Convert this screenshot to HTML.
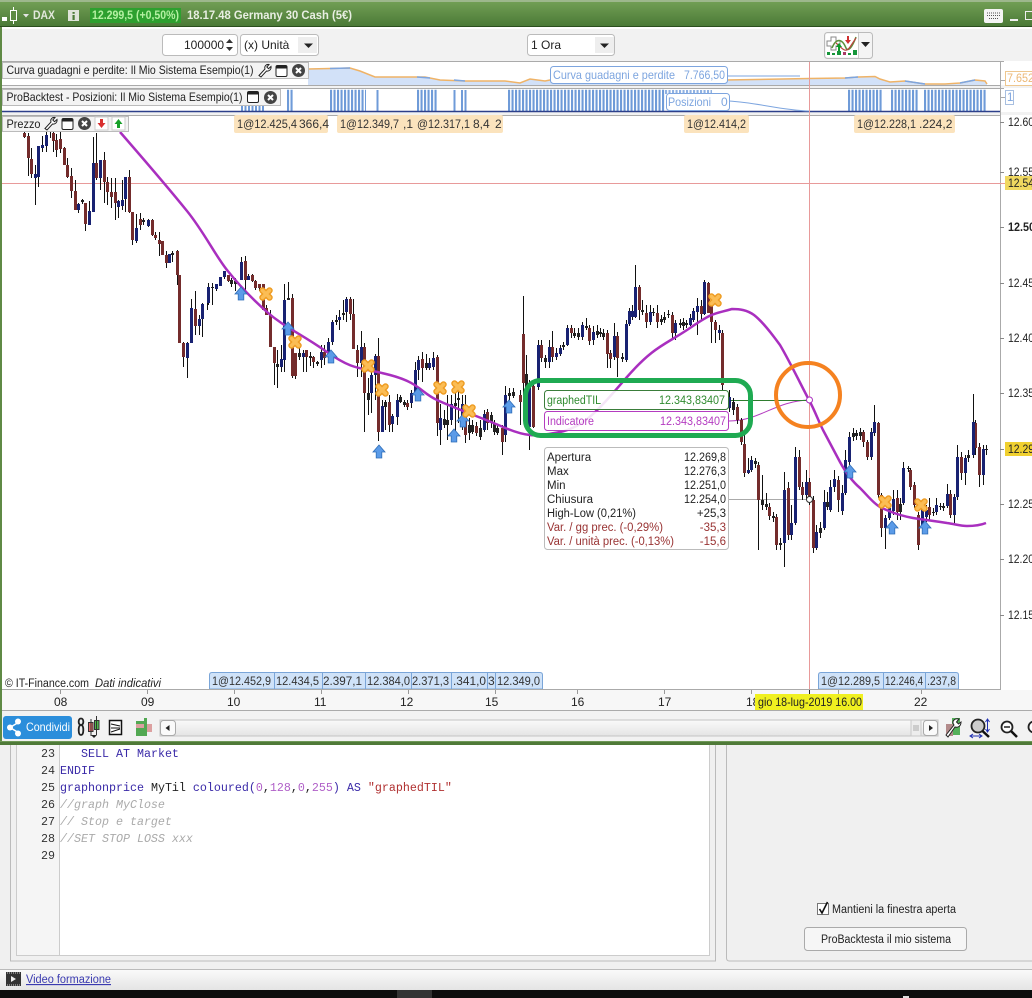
<!DOCTYPE html>
<html lang="it"><head><meta charset="utf-8"><title>DAX</title>
<style>html,body{margin:0;padding:0;background:#f0f0f0;width:1032px;height:998px;overflow:hidden}svg{display:block}text{font-family:"Liberation Sans",sans-serif;font-size:11.5px;fill:#222;white-space:pre}.m{font-family:"Liberation Mono",monospace;font-size:11.67px}.a{font-size:12px;fill:#222}.t{font-size:12px;fill:#333}</style></head><body>
<svg width="1032" height="998" viewBox="0 0 1032 998" xmlns="http://www.w3.org/2000/svg">
<defs>
<linearGradient id="g" x1="0" y1="0" x2="0" y2="1"><stop offset="0" stop-color="#719e54"/><stop offset="1" stop-color="#4b7a37"/></linearGradient>
<linearGradient id="s" x1="0" y1="0" x2="0" y2="1"><stop offset="0" stop-color="#fafafa"/><stop offset="1" stop-color="#e4e4e4"/></linearGradient>
<g id="ar"><path d="M0-7L6 0H2.8V6H-2.8V0H-6Z" fill="#5b9be8" stroke="#2e6db8" stroke-width=".8"/></g>
<g id="xx"><path d="M-3.5-3.500L3.500 3.500M3.500-3.500L-3.500 3.500" stroke="#ee9c22" stroke-width="6.500" stroke-linecap="round"/><path d="M-3.500-3.500L3.500 3.500M3.500-3.500L-3.500 3.500" stroke="#fbbd55" stroke-width="3.500" stroke-linecap="round"/></g>
<g id="wr"><path d="M1 12L7 5.5C6 2.5 8.500 .5 11 1L8.800 3.500L10.500 5.200L13 3C13.500 6 11 8 8.500 7.500L3 13.500Z" fill="#fff" stroke="#222" stroke-width="1"/></g>
<g id="wn"><rect x=".5" y=".5" width="11" height="11" rx="1.500" fill="#fff" stroke="#222" stroke-width="1"/><rect x=".5" y=".5" width="11" height="3" fill="#222"/></g>
<g id="cl"><circle cx="6.500" cy="6.500" r="6.500" fill="#444"/><path d="M4 4L9 9M9 4L4 9" stroke="#fff" stroke-width="2"/></g>
</defs>
<rect width="1032" height="998" fill="#f0f0f0"/>

<!-- title bar -->
<rect width="1032" height="2" fill="#9db78c"/><rect y="2" width="1032" height="24" fill="url(#g)"/><rect y="26" width="1032" height="1" fill="#2c4f1f"/><rect y="27" width="1032" height="2" fill="#fff"/>
<path d="M2 17V21H7V17Z" fill="#fff"/><rect x="10.500" y="10.500" width="6" height="10" fill="#5e8c44" stroke="#fff"/><path d="M13.500 7V10M13.500 21V24" stroke="#fff"/>
<path d="M23 14H29L26 17.500Z" fill="#e4e4e4"/>
<text x="33" y="19" textLength="22" lengthAdjust="spacingAndGlyphs" style="font-size:12px;font-weight:bold;fill:#e2e8dc">DAX</text>
<rect x="68" y="10" width="11" height="11" fill="#dfe4da"/><rect x="72.500" y="12" width="2.200" height="1.800" fill="#4b7a37"/><rect x="72.500" y="15" width="2.200" height="5" fill="#4b7a37"/>
<rect x="90" y="8" width="91" height="15" fill="#2da02f"/><text x="92" y="19" textLength="87" lengthAdjust="spacingAndGlyphs" style="font-size:12px;font-weight:bold;fill:#b4f0a2">12.299,5 (+0,50%)</text>
<text x="187" y="19" textLength="165" lengthAdjust="spacingAndGlyphs" style="font-size:12px;font-weight:bold;fill:#e8eee2">18.17.48 Germany 30 Cash (5€)</text>
<rect x="984" y="9" width="19" height="14" rx="2" fill="#f4f4f4"/><path d="M987 13H1000M987 15.500H1000M989 18.500H998" stroke="#555" stroke-dasharray="1 1"/>
<rect x="1010" y="19" width="8" height="2" fill="#f0f0f0"/><rect x="1025.500" y="11.500" width="9" height="8" fill="none" stroke="#f0f0f0"/>

<!-- toolbar -->
<rect x="0" y="29" width="1032" height="32" fill="#f2f2f2"/>
<rect x="162.500" y="34.500" width="75" height="21" rx="3" fill="#fff" stroke="#bbb"/>
<text x="184" y="49" class="a">100000</text>
<path d="M226 43L229.500 39L233 43ZM226 47H233L229.500 51Z" fill="#333"/>
<rect x="240.500" y="34.500" width="78" height="21" rx="3" fill="#fff" stroke="#bbb"/><rect x="298" y="37" width="19" height="16" fill="#eee"/>
<text x="244" y="49" class="a">(x) Unità</text><path d="M304 43.500H313L308.500 48Z" fill="#222"/>
<rect x="527.500" y="34.500" width="87" height="21" rx="3" fill="#fff" stroke="#bbb"/><rect x="595" y="37" width="19" height="16" fill="#eee"/>
<text x="531" y="49" class="a">1 Ora</text><path d="M600 43.500H609L604.500 48Z" fill="#222"/>
<rect x="824.500" y="32.500" width="48" height="26" rx="3" fill="#f4f4f4" stroke="#bbb"/><path d="M858.500 33V58" stroke="#ccc"/>
<rect x="826" y="34" width="32" height="23" fill="#fff"/>
<path d="M827 41H831V37H836V41H840V46H836V50H831V46H827Z" fill="#fff" stroke="#888"/>
<path d="M832 48C836 38 842 38 846 48C848 52 852 48 856 37" fill="none" stroke="#5d8f3d" stroke-width="1.500"/><path d="M836 43C842 48 845 54 850 47C852 44 854 41 856 38" fill="none" stroke="#b9433c" stroke-width="1.200"/>
<path d="M838 52V47H836L839 43L842 47H840V52Z" fill="#0a9a28"/><path d="M847 36H849V40H851L848 44L845 40H847Z" fill="#cf3030"/>
<path d="M827 55V52H830V55ZM832 55V53H835V55ZM837 55V51H841V55ZM848 55V53H851V55ZM853 55V50H857V55Z" fill="#16963a"/><path d="M843 55V52H846V55Z" fill="#a83a66"/>
<path d="M861 42H870L865.500 47Z" fill="#222"/>

<!-- left green border -->
<rect x="0" y="27" width="2" height="716" fill="#5f8a45"/>

<!-- chart -->
<rect x="2" y="61" width="998" height="629" fill="#fff"/>
<rect x="1000" y="61" width="32" height="629" fill="#fff"/>
<rect x="2" y="85" width="1030" height="3" fill="#f2f2f2"/><rect x="2" y="112" width="1030" height="3" fill="#f2f2f2"/>
<path d="M2 61.500H1000M2 85.500H1000M2 88.500H1000M2 115.500H1000" stroke="#aaa"/>
<path d="M1000.500 61V690M1000 61.500H1004M1000 80.500H1005M1000 88.500H1004M1000 97.500H1005" stroke="#aaa"/>

<!-- equity -->
<path d="M308 85V69L330 68.500L350 68L360 71L375 77H425L440 80L465 81H505L520 83L530 79L545 81L550 80H725L809 78.500L845 78L858 77L875 76.500L880 79L890 82L905 81L925 84H945L960 83L975 80L985 81L987 84V85Z" fill="#d2e1f8"/>
<path d="M308 69L330 68.500L350 68L360 71L375 77H425L440 80L465 81H505L520 83L530 79L545 81L550 80H725L809 78.500L845 78L858 77L875 76.500L880 79L890 82L905 81L925 84H945L960 83L975 80L985 81L987 84" fill="none" stroke="#efb367" stroke-width="1.500"/>
<path d="M330 68.500L350 68M417 77L430 78M454 80L465 81M845 78L858 77M905 81L925 84M960 83L975 80" fill="none" stroke="#7da5df" stroke-width="1.500"/>

<!-- positions -->
<path d="M241 108H265" stroke="#6f9bd8" stroke-width="6" stroke-dasharray="2 1.500"/>
<g stroke="#6f9bd8" stroke-width="21.500" stroke-dasharray="2.100 1.400">
<path d="M287 100.500H294M330 100.500H366M417 100.500H437M508 100.500H665M848 100.500H882M891 100.500H919M924 100.500H987"/>
</g>
<path d="M377.500 90V111M454.500 90V111M462 90V111M465.500 90V111" stroke="#6f9bd8" stroke-width="2"/>
<path d="M665 92H712" stroke="#8fb1e2" stroke-width="4" stroke-dasharray="2.100 1.400"/>
<path d="M2 111.500H1000" stroke="#2d3f8a" stroke-width="1.500"/>

<!-- crosshair -->
<path d="M809.500 62V690M2 183.500H1000" stroke="#e89a9a"/>

<!-- curve below -->
<path d="M729 421C760 421 775 401 809 400" fill="none" stroke="#b43bc0" stroke-width="1"/>
<path d="M729 400.500H809" stroke="#2f7d2f"/><path d="M729 499.500H809" stroke="#aaa"/>

<!-- candles -->
<g fill="none" transform="translate(.5,0)">
<path stroke="#111" stroke-width="1" d="M24 128V138M28 133V176M31 148V178M35 165V205M38 146V187M42 136V152M46 132V152M50 130V138M53 131V152M56 134V157M60 131V153M64 147V165M67 158V178M71 168V198M75 180V210M78 203V213M82 199V204M85 205V231M89 201V225M93 137V212M96 133V180M100 160V190M104 152V203M107 177V205M111 178V208M115 178V220M118 200V218M122 180V210M125 178V212M129 170V213M132 212V245M136 214V243M140 213V230M143 218V225M148 219V227M152 219V236M155 232V240M159 232V256M162 241V255M166 251V268M169 254V263M172 251V262M177 250V285M179 275V343M183 342V367M187 342V378M191 299V343M195 291V335M199 315V335M202 303V337M207 290V310M208 283V305M212 283V305M216 284V291M220 277V286M224 271V279M228 275V282M231 278V287M235 278V291M241 257V280M245 256V290M248 274V280M252 274V282M255 280V290M259 284V291M263 284V310M266 305V315M270 310V347M274 347V385M277 350V388M281 345V372M284 284V372M288 282V300M292 294V378M295 353V379M299 348V360M303 350V372M306 350V372M310 352V366M313 356V368M317 361V366M321 345V368M324 345V365M328 338V355M332 320V345M336 315V325M339 310V330M343 300V320M346 297V322M350 297V320M353 299V349M357 345V377M361 331V377M364 343V432M368 378V415M371 370V413M375 354V400M378 338V441M382 400V432M385 400V430M389 395V432M392 414V432M397 394V425M400 395V403M404 400V407M407 400V410M411 390V408M415 362V394M418 356V380M422 352V382M426 354V370M429 358V370M433 352V370M437 355V436M440 404V445M444 410V428M447 395V440M451 395V425M455 392V432M458 390V423M462 395V430M465 395V443M469 418V440M472 420V434M476 422V436M480 420V440M484 410V432M487 409V430M491 412V428M494 420V435M497 425V435M502 425V455M505 386V442M509 388V400M513 388V398M520 390V425M523 296V400M526 355V395M529 380V450M533 384V428M538 340V390M541 340V362M545 355V368M549 340V368M552 331V362M556 348V360M560 345V356M563 342V350M567 325V346M571 325V338M574 328V338M578 328V340M582 322V340M586 318V330M589 325V345M593 326V345M597 325V338M600 328V337M603 329V340M607 330V368M610 350V368M614 323V360M617 332V377M622 353V362M626 320V362M629 308V326M632 305V320M635 265V318M639 285V320M642 300V315M646 305V328M650 305V325M653 308V316M657 305V328M661 315V325M664 312V323M668 310V318M672 312V340M675 320V340M680 319V328M683 318V330M686 320V328M690 314V326M693 308V322M697 298V335M701 300V320M704 280V315M708 282V313M711 295V343M715 320V343M719 325V340M722 330V390M729 390V412M733 398V415M737 404V424M741 418V445M744 432V477M748 458V474M751 456V472M755 458V468M758 462V550M762 475V510M766 493V510M769 503V520M773 512V522M776 514V550M780 538V550M784 472V567M788 482V540M791 505V540M795 447V525M799 450V490M802 482V500M806 470V500M809 478V505M813 496V553M816 525V550M820 522V538M824 490V530M827 492V510M830 480V512M834 470V492M838 476V512M842 485V515M845 450V495M849 432V465M853 428V441M856 430V440M860 428V440M863 430V447M867 440V460M871 428V460M874 405V436M878 422V498M881 493V537M885 515V549M889 505V520M893 490V515M897 490V520M900 498V520M903 462V505M908 466V472M910 468V490M914 482V508M918 512V550M922 500V530M926 505V522M929 498V520M933 508V516M936 498V515M940 503V510M943 503V511M947 484V508M950 490V518M954 494V523M957 445V500M961 452V480M965 455V485M968 450V462M973 394V458M975 420V455M979 443V487M983 445V485M986 445V455"/>
<path stroke="#742c2c" stroke-width="3" d="M24 133V137M28 136V158M31 159V174M53 133V141M56 140V150M60 139V149M64 148V165M67 165V177M71 176V191M75 191V210M85 203V224M96 163V178M104 160V182M107 182V192M111 192V197M115 192V203M129 177V212M132 212V240M140 219V225M152 220V235M155 235V238M159 240V244M162 241V255M166 255V263M177 251V275M179 275V343M183 343V357M195 309V326M228 275V281M245 261V280M252 275V281M255 281V288M259 284V288M263 284V310M266 308V315M270 315V347M274 347V363M292 298V376M295 353V376M306 350V357M313 357V362M324 352V358M350 299V314M353 314V349M357 350V363M364 347V393M378 356V432M389 402V425M407 403V407M422 359V368M437 357V423M465 417V435M476 426V433M487 412V423M502 428V442M520 395V402M523 334V383M533 386V427M541 345V358M552 347V357M571 328V333M589 328V341M607 333V354M610 353V359M617 336V358M639 287V310M646 313V322M657 313V322M672 315V333M701 306V314M708 283V313M711 303V322M715 322V330M722 333V385M737 407V420M741 420V442M744 444V473M758 465V500M769 507V516M776 517V545M788 488V535M799 457V487M802 487V495M809 482V498M813 500V548M838 480V500M863 432V442M867 442V457M878 423V495M881 495V528M897 498V512M910 470V487M914 485V505M918 515V545M929 507V515M950 494V515M961 457V473M975 423V448M979 447V475"/>
<path stroke="#182272" stroke-width="3" d="M35 174V178M38 146V177M42 145V148M46 135V146M78 204V210M89 211V225M93 163V212M100 160V178M118 201V207M122 200V206M125 177V199M136 228V241M148 220V226M169 254V263M187 343V358M191 308V343M199 319V326M202 304V319M208 287V303M216 284V289M220 277V286M224 271V277M241 262V280M248 276V280M281 359V367M284 300V360M303 353V357M321 352V360M328 342V353M332 322V342M339 317V320M346 299V312M361 347V363M371 375V393M375 356V375M382 406V432M392 416V424M397 400V417M411 393V403M415 370V392M418 360V370M429 363V368M433 358V367M440 418V430M451 404V420M462 404V417M484 414V430M505 395V435M529 386V427M538 345V387M549 347V362M556 353V357M560 348V354M567 328V345M582 325V337M593 332V340M614 336V357M626 324V360M629 311V324M632 311V317M635 287V317M650 312V322M675 323V333M690 318V325M693 311V320M697 306V312M704 282V314M719 330V333M729 397V408M748 470V473M751 460V470M784 490V543M791 523V535M795 457V523M806 482V495M816 532V548M824 502V528M830 487V510M834 479V487M842 493V511M845 460V493M849 437V462M871 432V457M874 422V433M885 518V528M889 508V518M893 499V511M903 468V503M922 505V527M926 510V517M936 505V512M947 494V506M954 497V515M957 457V497M965 458V473M973 422V455M983 449V475"/>
<path stroke="#222" stroke-width="3" d="M82 200V202M143 220V222M172 253V255M212 287V288M231 280V284M235 281V284M277 364V367M288 298V300M299 353V357M310 356V358M317 362V364M336 320V322M343 313V315M368 393V400M385 402V407M400 397V402M404 402V405M426 363V368M444 419V425M447 420V425M455 403V406M458 398V400M469 425V433M472 425V432M480 428V437M491 415V423M494 423V432M497 428V433M509 393V396M513 392V396M526 374V390M545 358V362M563 345V347M574 333V336M578 333V337M586 326V328M597 331V335M600 332V334M603 333V337M622 357V359M642 310V312M653 312V313M661 319V322M664 317V320M668 314V315M680 323V325M683 322V326M686 323V325M733 402V410M755 461V464M762 500V505M766 504V507M773 516V518M780 543V545M820 528V533M827 502V507M853 433V437M856 433V436M860 432V436M900 504V512M908 468V469M933 512V513M940 506V507M943 506V508M968 455V458M986 449V450"/>
</g>

<!-- indicator -->
<path d="M120 132C140 155 170 190 187 211S215 255 227 270S250 297 267 312S300 333 327 352S360 367 390 375S420 392 437 400S480 417 503 427S535 437 560 432S600 408 627 377S665 345 690 328S715 314 732 309C740 309 747 310 754 315C763 322 772 334 780 345C790 362 800 383 809 400C815 411 818 420 823 430L840 462C846 473 853 482 860 488C868 496 873 503 880 507C890 512 902 516 913 518C925 520 935 521 947 523C955 524 960 526 967 526C975 526 981 525 986 523" fill="none" stroke="#a92fbf" stroke-width="2.500" stroke-linejoin="round"/>

<!-- arrows / markers -->
<use href="#ar" x="241" y="294"/><use href="#ar" x="288" y="329"/><use href="#ar" x="331" y="357"/><use href="#ar" x="379" y="452"/><use href="#ar" x="454" y="436"/><use href="#ar" x="463" y="421"/><use href="#ar" x="418" y="395"/><use href="#ar" x="509" y="407"/><use href="#ar" x="850" y="472"/><use href="#ar" x="892" y="528"/><use href="#ar" x="925" y="528"/>
<use href="#xx" x="266" y="294"/><use href="#xx" x="295" y="342"/><use href="#xx" x="368" y="366"/><use href="#xx" x="382" y="390"/><use href="#xx" x="440" y="388"/><use href="#xx" x="458" y="387"/><use href="#xx" x="469" y="411"/><use href="#xx" x="715" y="300"/><use href="#xx" x="885" y="502"/><use href="#xx" x="921" y="505"/>

<!-- panel labels -->
<rect x="2.500" y="62.500" width="306" height="16" fill="#f3f3f3" stroke="#bbb"/>
<text x="6.500" y="74" textLength="247" lengthAdjust="spacingAndGlyphs" style="font-size:12px">Curva guadagni e perdite: Il Mio Sistema Esempio(1)</text>
<use href="#wr" x="258" y="63.500"/><use href="#wn" x="275.500" y="65"/><use href="#cl" x="292" y="64"/>
<rect x="2.500" y="89.500" width="278" height="16" fill="#f3f3f3" stroke="#bbb"/>
<text x="6.500" y="101" textLength="236" lengthAdjust="spacingAndGlyphs" style="font-size:12px">ProBacktest - Posizioni: Il Mio Sistema Esempio(1)</text>
<use href="#wn" x="247" y="91"/><use href="#cl" x="264" y="91"/>
<rect x="2.500" y="116.500" width="126" height="15" fill="#f3f3f3" stroke="#bbb"/>
<text x="6.500" y="128" textLength="34" lengthAdjust="spacingAndGlyphs" style="font-size:12px">Prezzo</text>
<use href="#wr" x="44" y="116.500"/><use href="#wn" x="61.500" y="118"/><use href="#cl" x="78" y="117"/>
<rect x="95" y="117" width="13" height="13" fill="#fff" stroke="#ccc"/><path d="M100 119H103V123H105.500L101.500 128L97.500 123H100Z" fill="#d93030"/>
<rect x="112" y="117" width="13" height="13" fill="#fff" stroke="#ccc"/><path d="M117 128H120V124H122.500L118.500 119L114.500 124H117Z" fill="#16a028"/>

<!-- order labels top -->
<g fill="#fbe3bd"><rect x="234" y="115" width="94" height="18" rx="2"/><rect x="337" y="115" width="166" height="18" rx="2"/><rect x="684" y="115" width="65" height="18" rx="2"/><rect x="854" y="115" width="101" height="18" rx="2"/></g>
<text x="237" y="128" textLength="60" lengthAdjust="spacingAndGlyphs" class="t">1@12.425,4</text><text x="299" y="128" class="t">366,4</text>
<text x="340" y="128" textLength="59" lengthAdjust="spacingAndGlyphs" class="t">1@12.349,7</text><text x="403" y="128" class="t">,1</text>
<text x="417" y="128" textLength="53" lengthAdjust="spacingAndGlyphs" class="t">@12.317,1</text><text x="473" y="128" class="t">8,4</text><text x="495" y="128" class="t">2</text>
<text x="687" y="128" textLength="59" lengthAdjust="spacingAndGlyphs" class="t">1@12.414,2</text>
<text x="857" y="128" textLength="59" lengthAdjust="spacingAndGlyphs" class="t">1@12.228,1</text><text x="919" y="128" class="t">.224,2</text>

<!-- equity tooltip -->
<path d="M728 76H800" stroke="#7da5df"/><path d="M729 101C760 103 780 110 809 111" stroke="#7da5df" fill="none"/>
<rect x="550.500" y="66.500" width="177" height="17" rx="3" fill="#fff" stroke="#7da5df"/>
<text x="553" y="79" textLength="122" lengthAdjust="spacingAndGlyphs" style="font-size:12px;fill:#7da5df">Curva guadagni e perdite</text><text x="684" y="79" textLength="41" lengthAdjust="spacingAndGlyphs" style="font-size:12px;fill:#7da5df">7.766,50</text>
<rect x="666.500" y="93.500" width="63" height="17" rx="3" fill="#fff" stroke="#7da5df"/>
<text x="668" y="106" textLength="43" lengthAdjust="spacingAndGlyphs" style="font-size:12px;fill:#7da5df">Posizioni</text><text x="721" y="106" style="font-size:12px;fill:#7da5df">0</text>

<!-- tooltips -->
<rect x="544.500" y="390.500" width="184" height="19" rx="3" fill="#fff" fill-opacity=".88" stroke="#3a7d3a"/>
<text x="547" y="404" textLength="54" lengthAdjust="spacingAndGlyphs" style="font-size:11.500px;fill:#2f8a2f">graphedTIL</text><text x="659" y="404" textLength="66" lengthAdjust="spacingAndGlyphs" style="font-size:11.500px;fill:#2f8a2f">12.343,83407</text>
<rect x="544.500" y="411.500" width="184" height="19" rx="3" fill="#fff" fill-opacity=".88" stroke="#b43bc0"/>
<text x="547" y="425" textLength="47" lengthAdjust="spacingAndGlyphs" style="font-size:11.500px;fill:#b43bc0">Indicatore</text><text x="660" y="425" textLength="66" lengthAdjust="spacingAndGlyphs" style="font-size:11.500px;fill:#b43bc0">12.343,83407</text>
<rect x="544.500" y="447.500" width="184" height="102" rx="3" fill="#fff" stroke="#bbb"/>
<g style="font-size:11px">
<text x="547" y="461">Apertura</text><text x="684" y="461" textLength="42" lengthAdjust="spacingAndGlyphs">12.269,8</text>
<text x="547" y="475">Max</text><text x="684" y="475" textLength="42" lengthAdjust="spacingAndGlyphs">12.276,3</text>
<text x="547" y="489">Min</text><text x="684" y="489" textLength="42" lengthAdjust="spacingAndGlyphs">12.251,0</text>
<text x="547" y="503">Chiusura</text><text x="684" y="503" textLength="42" lengthAdjust="spacingAndGlyphs">12.254,0</text>
<text x="547" y="517" textLength="89" lengthAdjust="spacingAndGlyphs">High-Low (0,21%)</text><text x="726" y="517" text-anchor="end">+25,3</text>
<text x="547" y="531" textLength="116" lengthAdjust="spacingAndGlyphs" style="fill:#933">Var. / gg prec. (-0,29%)</text><text x="726" y="531" text-anchor="end" style="fill:#933">-35,3</text>
<text x="547" y="545" textLength="127" lengthAdjust="spacingAndGlyphs" style="fill:#933">Var. / unità prec. (-0,13%)</text><text x="726" y="545" text-anchor="end" style="fill:#933">-15,6</text>
</g>
<rect x="525.500" y="380.500" width="225" height="55" rx="15" fill="none" stroke="#1faa52" stroke-width="5"/>
<circle cx="808" cy="395" r="32" fill="none" stroke="#f58220" stroke-width="4"/>
<circle cx="809.500" cy="400" r="3" fill="#fff" stroke="#a92fbf"/><circle cx="809.500" cy="499.500" r="3" fill="#fff" stroke="#333"/>

<!-- right axis -->
<g>
<path d="M1000 122.500H1004M1000 172.500H1004M1000 227.500H1004M1000 283.500H1004M1000 338.500H1004M1000 393.500H1004M1000 449.500H1004M1000 504.500H1004M1000 559.500H1004M1000 615.500H1004" stroke="#888"/>
<text x="1008" y="126" class="a" textLength="26" lengthAdjust="spacingAndGlyphs">12.60</text><text x="1008" y="176" class="a" textLength="26" lengthAdjust="spacingAndGlyphs">12.55</text>
<text x="1008" y="231" class="a" textLength="27" lengthAdjust="spacingAndGlyphs" style="font-weight:bold">12.50</text><text x="1008" y="287" class="a" textLength="26" lengthAdjust="spacingAndGlyphs">12.45</text><text x="1008" y="342" class="a" textLength="26" lengthAdjust="spacingAndGlyphs">12.40</text><text x="1008" y="397" class="a" textLength="26" lengthAdjust="spacingAndGlyphs">12.35</text><text x="1008" y="508" class="a" textLength="26" lengthAdjust="spacingAndGlyphs">12.25</text><text x="1008" y="563" class="a" textLength="26" lengthAdjust="spacingAndGlyphs">12.20</text><text x="1008" y="619" class="a" textLength="26" lengthAdjust="spacingAndGlyphs">12.15</text>
<rect x="1005" y="176" width="27" height="14" fill="#f0d860"/><path d="M1000 183.500H1005" stroke="#e89a9a"/><text x="1008" y="187" class="a" textLength="26" lengthAdjust="spacingAndGlyphs">12.54</text>
<rect x="1005" y="442" width="27" height="14" fill="#f0d030"/><text x="1008" y="453" class="a" textLength="26" lengthAdjust="spacingAndGlyphs">12.29</text>
<rect x="1005.500" y="71.500" width="30" height="14" fill="#fff" stroke="#eec78f"/><text x="1007" y="82" textLength="27" lengthAdjust="spacingAndGlyphs" style="fill:#ecb877;font-size:11.500px">7.652</text>
<rect x="1005.500" y="90.500" width="8" height="14" fill="#fff" stroke="#a8bfe0"/><text x="1007" y="101" style="fill:#7da5df;font-size:11.500px">1</text>
</g>

<!-- bottom of chart -->
<text x="5" y="687" textLength="84" lengthAdjust="spacingAndGlyphs" style="font-size:11.500px">© IT-Finance.com</text><text x="95" y="687" textLength="66" lengthAdjust="spacingAndGlyphs" style="font-size:11.500px;font-style:italic">Dati indicativi</text>
<g fill="#cfe2f8" stroke="#7aa5d8"><path d="M209.500 689V675Q209.500 672.500 212 672.500H274.500V689ZM274.500 672.500H322.500V689H274.500ZM322.500 672.500H365.500V689H322.500ZM365.500 672.500H411.500V689H365.500ZM411.500 672.500H451.500V689H411.500ZM451.500 672.500H487.500V689H451.500ZM487.500 672.500H495.500V689H487.500ZM495.500 672.500H540Q542.500 672.500 542.500 675V689H495.500Z"/><path d="M818.500 689V675Q818.500 672.500 821 672.500H883.500V689ZM883.500 672.500H925.500V689H883.500ZM925.500 672.500H956Q958.500 672.500 958.500 675V689H925.500Z"/></g>
<g><text x="212" y="685" textLength="59" lengthAdjust="spacingAndGlyphs" class="t">1@12.452,9</text><text x="276" y="685" textLength="43" lengthAdjust="spacingAndGlyphs" class="t">12.434,5</text><text x="323" y="685" textLength="39" lengthAdjust="spacingAndGlyphs" class="t">2.397,1</text><text x="367" y="685" textLength="43" lengthAdjust="spacingAndGlyphs" class="t">12.384,0</text><text x="412" y="685" textLength="37" lengthAdjust="spacingAndGlyphs" class="t">2.371,3</text><text x="453" y="685" textLength="33" lengthAdjust="spacingAndGlyphs" class="t">.341,0</text><text x="488" y="685" class="t">3</text><text x="497" y="685" textLength="43" lengthAdjust="spacingAndGlyphs" class="t">12.349,0</text><text x="821" y="685" textLength="59" lengthAdjust="spacingAndGlyphs" class="t">1@12.289,5</text><text x="885" y="685" textLength="38" lengthAdjust="spacingAndGlyphs" class="t">12.246,4</text><text x="927" y="685" textLength="29" lengthAdjust="spacingAndGlyphs" class="t">.237,8</text></g>
<rect x="2" y="690" width="1030" height="20" fill="#f7f7f7"/>
<path d="M2 689.500H1000" stroke="#aaa"/><path d="M2 710.500H1032" stroke="#aaa"/>
<path d="M60.500 690V694M147.500 690V694M234.500 690V694M321.500 690V694M408.500 690V694M495.500 690V694M577.500 690V694M664.500 690V694M751.500 690V694M838.500 690V694M921.500 690V694" stroke="#999"/>
<path d="M809.500 690V694" stroke="#222"/>
<text x="54" y="706" class="a">08</text><text x="141" y="706" class="a">09</text><text x="227" y="706" class="a">10</text><text x="314" y="706" class="a">11</text><text x="400" y="706" class="a">12</text><text x="485" y="706" class="a">15</text><text x="571" y="706" class="a">16</text><text x="658" y="706" class="a">17</text><text x="746" y="706" class="a">18</text><text x="914" y="706" class="a">22</text>
<rect x="755" y="694" width="108" height="16" fill="#f0f020"/><text x="758" y="706" textLength="104" lengthAdjust="spacingAndGlyphs" class="a">gio 18-lug-2019 16.00</text>

<!-- bottom toolbar -->
<rect x="2" y="711" width="1030" height="30" fill="#f2f2f2"/>
<rect x="3" y="716" width="69" height="23" rx="3" fill="#2b8edb"/>
<path d="M19 722L10 727.500L19 733" stroke="#fff" stroke-width="1.500" fill="none"/><circle cx="10" cy="727.500" r="3" fill="#fff"/><circle cx="18" cy="721.500" r="3" fill="#fff"/><circle cx="18" cy="733.500" r="3" fill="#fff"/>
<text x="26" y="731" textLength="44" lengthAdjust="spacingAndGlyphs" style="font-size:12px;fill:#fff">Condividi</text>
<path d="M81 718.500C78 718.500 78 724 80.500 725C78 726 78 735 81 735C84 735 84 726 81.500 725C84 724 84 718.500 81 718.500Z" fill="none" stroke="#222" stroke-width="1.800"/>
<rect x="88.500" y="722.500" width="4.500" height="9" fill="#e86a6a" stroke="#333"/><rect x="94.500" y="720.500" width="4.500" height="9" fill="#4db84a" stroke="#333"/><path d="M96.500 716V735M91 719V736" stroke="#333"/><path d="M91 735H97L94 738Z" fill="#222"/>
<rect x="109.500" y="720.500" width="12" height="14" fill="#fff" stroke="#111" stroke-width="1.500"/><path d="M111 724L120 726M111 728H120M111 732L120 729" stroke="#111"/>
<path d="M136 721H144V724H136ZM144 724H152V728H144ZM136 724H144V728H136ZM136 732H144V736H136ZM144 728H152V732H144ZM136 728H144V732H136Z" fill="#dca0a0"/><path d="M136 721H144V724H136ZM136 728H144V732H136ZM136 732H144V736H136ZM144 718H147V736H144Z" fill="#52a852"/>
<rect x="160" y="720" width="778" height="16" fill="url(#s)" stroke="#c4c4c4"/>
<rect x="160.500" y="720.500" width="15" height="15" rx="3" fill="#fafafa" stroke="#aaa"/><path d="M169.500 725V731L165.500 728Z" fill="#222"/>
<rect x="911" y="720" width="10" height="16" fill="#ededed" stroke="#c8c8c8"/>
<path d="M913 726H919M913 728H919M913 730H919" stroke="#aaa"/>
<rect x="923.500" y="720.500" width="14" height="15" rx="3" fill="#fafafa" stroke="#aaa"/><path d="M929 725V731L933 728Z" fill="#222"/>
<path d="M952 718H960V735H952Z" fill="#55b05a"/><path d="M946 724H953V736H946Z" fill="#b28a8a"/><path d="M946 735L954 725C951 721 955 718 959 719L956.500 722L958.500 724L961 722C961 726 958 728 955 727L948 737Z" fill="#fff" stroke="#222"/>
<circle cx="978" cy="726" r="6.500" fill="#ccc" stroke="#222" stroke-width="1.800"/><path d="M982.500 731L989 737" stroke="#111" stroke-width="2.500"/><path d="M987.500 720V731M985.500 722L987.500 719L989.500 722M985.500 729L987.500 732L989.500 729M971 736H981M973 734L970 736L973 738M979 734L982 736L979 738" stroke="#1f2fb0" fill="none"/>
<circle cx="1007" cy="727" r="5.500" fill="#fff" stroke="#222" stroke-width="1.800"/><path d="M1004 727H1010" stroke="#222" stroke-width="1.500"/><path d="M1011 731L1017 737" stroke="#111" stroke-width="2.500"/>
<circle cx="1034" cy="727" r="5.500" fill="#fff" stroke="#222" stroke-width="1.800"/>
<rect x="0" y="741" width="1032" height="4" fill="#4f7a38"/><rect x="0" y="741" width="1032" height="1" fill="#6e9856"/>

<!-- editor -->
<rect x="0" y="745" width="1032" height="224" fill="#f0f0f0"/>
<path d="M10.500 745V961H715.500V745" fill="none" stroke="#bbb"/>
<rect x="17" y="745" width="692" height="210" fill="#fff"/>
<path d="M16.500 745V955.500H709.500V745" fill="none" stroke="#ccc"/>
<rect x="17" y="745" width="42" height="210" fill="#f5f5f5"/><path d="M59.500 745V955" stroke="#ccc"/>
<path d="M726.500 745V958Q726.500 961 729.500 961H1032" fill="none" stroke="#bbb"/>
<g>
<text x="41" y="757" class="m" style="fill:#333">23</text><text x="41" y="774" class="m" style="fill:#333">24</text><text x="41" y="791" class="m" style="fill:#333">25</text><text x="41" y="808" class="m" style="fill:#333">26</text><text x="41" y="825" class="m" style="fill:#333">27</text><text x="41" y="842" class="m" style="fill:#333">28</text><text x="41" y="859" class="m" style="fill:#333">29</text>
<text x="81" y="757" class="m" style="fill:#3a2aa8">SELL AT Market</text>
<text x="60" y="774" class="m" style="fill:#3a2aa8">ENDIF</text>
<text x="60" y="791" class="m" style="fill:#222"><tspan style="fill:#3a2aa8">graphonprice</tspan> MyTil <tspan style="fill:#3a2aa8">coloured(</tspan><tspan style="fill:#b060c8">0</tspan>,<tspan style="fill:#b060c8">128</tspan>,<tspan style="fill:#b060c8">0</tspan>,<tspan style="fill:#b060c8">255</tspan><tspan style="fill:#3a2aa8">) AS</tspan> <tspan style="fill:#b03030">"graphedTIL"</tspan></text>
<text x="60" y="808" class="m" style="fill:#aaa;font-style:italic">//graph MyClose</text>
<text x="60" y="825" class="m" style="fill:#aaa;font-style:italic">// Stop e target</text>
<text x="60" y="842" class="m" style="fill:#aaa;font-style:italic">//SET STOP LOSS xxx</text>
</g>

<!-- right controls -->
<rect x="817.500" y="903.500" width="11" height="11" fill="#fff" stroke="#777"/><path d="M819.500 909L822 913L827.500 902" fill="none" stroke="#111" stroke-width="1.600"/>
<text x="832" y="913" textLength="124" lengthAdjust="spacingAndGlyphs" style="font-size:11.500px">Mantieni la finestra aperta</text>
<rect x="804.500" y="927.500" width="162" height="23" rx="3" fill="#f6f6f6" stroke="#aaa"/>
<text x="821" y="943" textLength="130" lengthAdjust="spacingAndGlyphs" style="font-size:11.500px">ProBacktesta il mio sistema</text>

<!-- footer -->
<path d="M0 969.500H1032" stroke="#bbb"/><rect y="970" width="1032" height="20" fill="url(#s)"/>
<rect x="6" y="972" width="15" height="14" fill="#333"/><path d="M7 973H20M7 985H20" stroke="#ccc" stroke-dasharray="1 1"/><path d="M11 976V982L16 979Z" fill="#eee"/>
<text x="26" y="983" textLength="85" lengthAdjust="spacingAndGlyphs" style="font-size:11.500px;fill:#3a3ab0;text-decoration:underline">Video formazione</text>
<rect y="990" width="1032" height="8" fill="#0d0d0d"/><rect x="397" y="990" width="35" height="8" fill="#333"/><rect x="903" y="996" width="6" height="2" fill="#ddd"/>
</svg>
</body></html>
